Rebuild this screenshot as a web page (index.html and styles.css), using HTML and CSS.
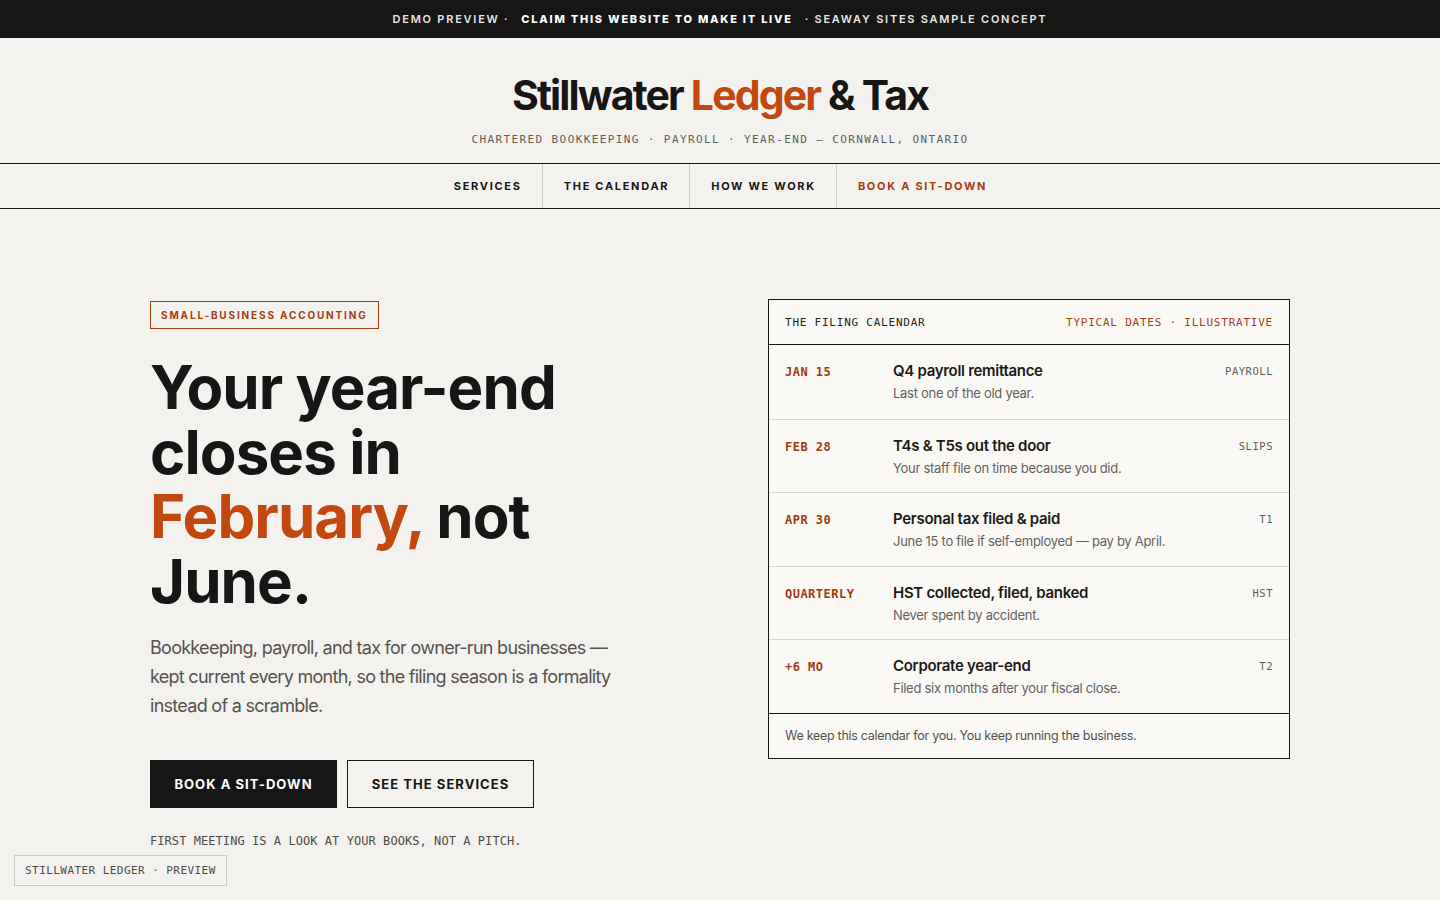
FILE: index.html
```html
<!DOCTYPE html>
<html lang="en">
<head>
<meta charset="utf-8">
<title>Stillwater Ledger &amp; Tax</title>
<link rel="stylesheet" href="styles.css">
</head>
<body>
<div class="topbar">
  <span>DEMO PREVIEW ·</span>
  <strong>CLAIM THIS WEBSITE TO MAKE IT LIVE</strong>
  <span>· SEAWAY SITES SAMPLE CONCEPT</span>
</div>
<header class="masthead">
  <h1 class="brand">Stillwater <span class="accent">Ledger</span> &amp; Tax</h1>
  <p class="tagline">CHARTERED BOOKKEEPING · PAYROLL · YEAR-END — CORNWALL, ONTARIO</p>
</header>
<nav class="nav">
  <a class="nav-item" href="#">SERVICES</a>
  <a class="nav-item" href="#">THE CALENDAR</a>
  <a class="nav-item" href="#">HOW WE WORK</a>
  <a class="nav-item nav-cta" href="#">BOOK A SIT-DOWN</a>
</nav>
<main class="hero">
  <section class="hero-copy">
    <span class="eyebrow">SMALL-BUSINESS ACCOUNTING</span>
    <h2 class="headline">Your year-end closes in <span class="accent">February,</span> not June.</h2>
    <p class="lede">Bookkeeping, payroll, and tax for owner-run businesses — kept current every month, so the filing season is a formality instead of a scramble.</p>
    <div class="actions">
      <a class="btn btn-dark" href="#">BOOK A SIT-DOWN</a>
      <a class="btn btn-outline" href="#">SEE THE SERVICES</a>
    </div>
    <p class="note">FIRST MEETING IS A LOOK AT YOUR BOOKS, NOT A PITCH.</p>
  </section>
  <aside class="calendar">
    <div class="cal-head">
      <span class="cal-title">THE FILING CALENDAR</span>
      <span class="cal-meta">TYPICAL DATES · ILLUSTRATIVE</span>
    </div>
    <div class="cal-row">
      <span class="cal-date">JAN 15</span>
      <div class="cal-body"><div class="cal-name">Q4 payroll remittance</div><div class="cal-desc">Last one of the old year.</div></div>
      <span class="cal-tag">PAYROLL</span>
    </div>
    <div class="cal-row">
      <span class="cal-date">FEB 28</span>
      <div class="cal-body"><div class="cal-name">T4s &amp; T5s out the door</div><div class="cal-desc">Your staff file on time because you did.</div></div>
      <span class="cal-tag">SLIPS</span>
    </div>
    <div class="cal-row">
      <span class="cal-date">APR 30</span>
      <div class="cal-body"><div class="cal-name">Personal tax filed &amp; paid</div><div class="cal-desc">June 15 to file if self-employed — pay by April.</div></div>
      <span class="cal-tag">T1</span>
    </div>
    <div class="cal-row">
      <span class="cal-date">QUARTERLY</span>
      <div class="cal-body"><div class="cal-name">HST collected, filed, banked</div><div class="cal-desc">Never spent by accident.</div></div>
      <span class="cal-tag">HST</span>
    </div>
    <div class="cal-row">
      <span class="cal-date">+6 MO</span>
      <div class="cal-body"><div class="cal-name">Corporate year-end</div><div class="cal-desc">Filed six months after your fiscal close.</div></div>
      <span class="cal-tag">T2</span>
    </div>
    <div class="cal-foot">We keep this calendar for you. You keep running the business.</div>
  </aside>
</main>
<div class="preview-badge">STILLWATER LEDGER · PREVIEW</div>
</body>
</html>
```
FILE: styles.css
```css
* { box-sizing: border-box; }
html, body { margin: 0; padding: 0; }
body {
  background: #f3f2ee;
  color: #161616;
  font-family: Inter, "Noto Sans", sans-serif;
  height: 900px;
  overflow: hidden;
}
a { text-decoration: none; color: inherit; }
.accent { color: #c2480f; }

.topbar {
  background: #161616;
  color: #e9e7e1;
  height: 38px;
  display: flex;
  align-items: center;
  justify-content: center;
  gap: 6px;
  font-size: 11px;
  font-weight: 600;
  letter-spacing: 0.16em;
}
.topbar strong { color: #fff; font-weight: 800; margin: 0 6px; }

.masthead {
  text-align: center;
  padding-top: 32px;
  padding-bottom: 17px;
}
.brand {
  margin: 0;
  font-size: 41px;
  font-weight: 700;
  letter-spacing: -0.045em;
  line-height: 50px;
}
.tagline {
  margin: 13px 0 0;
  font-family: "DejaVu Sans Mono", monospace;
  font-size: 11px;
  letter-spacing: 0.127em;
  color: #5f5d58;
}

.nav {
  display: flex;
  justify-content: center;
  border-top: 1px solid #161616;
  border-bottom: 1px solid #161616;
  height: 46px;
}
.nav-item {
  display: flex;
  align-items: center;
  padding: 0 20px 0 21px;
  font-size: 11px;
  font-weight: 700;
  letter-spacing: 0.155em;
  border-left: 1px solid #cfccc5;
}
.nav-item:first-child { border-left: none; }
.nav-cta { color: #a83d0f; }

.hero {
  display: grid;
  grid-template-columns: 522px 522px;
  column-gap: 96px;
  justify-content: center;
  align-items: start;
  padding-top: 90px;
}
.hero-copy { padding-top: 2px; }
.eyebrow {
  display: inline-block;
  border: 1.5px solid #a83d0f;
  color: #a83d0f;
  font-size: 10px;
  font-weight: 700;
  letter-spacing: 0.185em;
  padding: 7px 10px 6px;
  line-height: 13px;
}
.headline {
  margin: 26px 0 0;
  font-size: 60px;
  line-height: 64.5px;
  font-weight: 700;
  letter-spacing: -0.015em;
}
.lede {
  margin: 20px 0 0;
  max-width: 476px;
  font-size: 18px;
  line-height: 29px;
  letter-spacing: -0.04em;
  color: #55534e;
}
.actions {
  display: flex;
  gap: 10px;
  margin-top: 40px;
}
.btn {
  display: flex;
  align-items: center;
  justify-content: center;
  height: 48px;
  width: 187px;
  font-size: 13px;
  font-weight: 700;
  letter-spacing: 0.08em;
}
.btn-dark { background: #161616; color: #fff; }
.btn-outline { border: 1px solid #161616; color: #161616; }
.note {
  margin: 26px 0 0;
  font-family: "DejaVu Sans Mono", monospace;
  font-size: 12px;
  letter-spacing: 0.005em;
  color: #4e4c48;
}

.calendar {
  background: #faf9f6;
  border: 1px solid #161616;
}
.cal-head {
  display: flex;
  justify-content: space-between;
  align-items: center;
  height: 45px;
  padding: 0 16px;
  border-bottom: 1px solid #161616;
  font-family: "DejaVu Sans Mono", monospace;
  font-size: 11px;
  letter-spacing: 0.07em;
}
.cal-title { color: #262521; }
.cal-meta { color: #a83d0f; }
.cal-row {
  display: flex;
  align-items: flex-start;
  height: 73.6px;
  padding: 16px 16px 0;
  border-top: 1px solid #d8d5ce;
}
.cal-row:nth-child(2) { border-top: none; }
.cal-date {
  width: 108px;
  flex: none;
  font-family: "DejaVu Sans Mono", monospace;
  font-weight: 700;
  font-size: 12px;
  letter-spacing: 0.04em;
  color: #a33a0f;
  padding-top: 4px;
}
.cal-body { flex: 1; }
.cal-name {
  font-size: 15px;
  font-weight: 600;
  line-height: 20px;
  letter-spacing: -0.02em;
  color: #1b1a17;
}
.cal-desc {
  margin-top: 3px;
  font-size: 13px;
  line-height: 18px;
  letter-spacing: -0.022em;
  color: #64625d;
}
.cal-tag {
  font-family: "DejaVu Sans Mono", monospace;
  font-size: 10.5px;
  letter-spacing: 0.05em;
  color: #5f5d58;
  padding-top: 4px;
}
.cal-foot {
  border-top: 1px solid #161616;
  height: 45px;
  display: flex;
  align-items: center;
  padding: 0 16px;
  font-size: 12.5px;
  letter-spacing: -0.022em;
  color: #55534e;
}

.preview-badge {
  position: fixed;
  left: 14px;
  bottom: 14px;
  border: 1px solid #cfccc5;
  background: #f3f2ee;
  padding: 8px 10px;
  font-family: "DejaVu Sans Mono", monospace;
  font-size: 11px;
  letter-spacing: 0.04em;
  color: #4e4c48;
}
```
